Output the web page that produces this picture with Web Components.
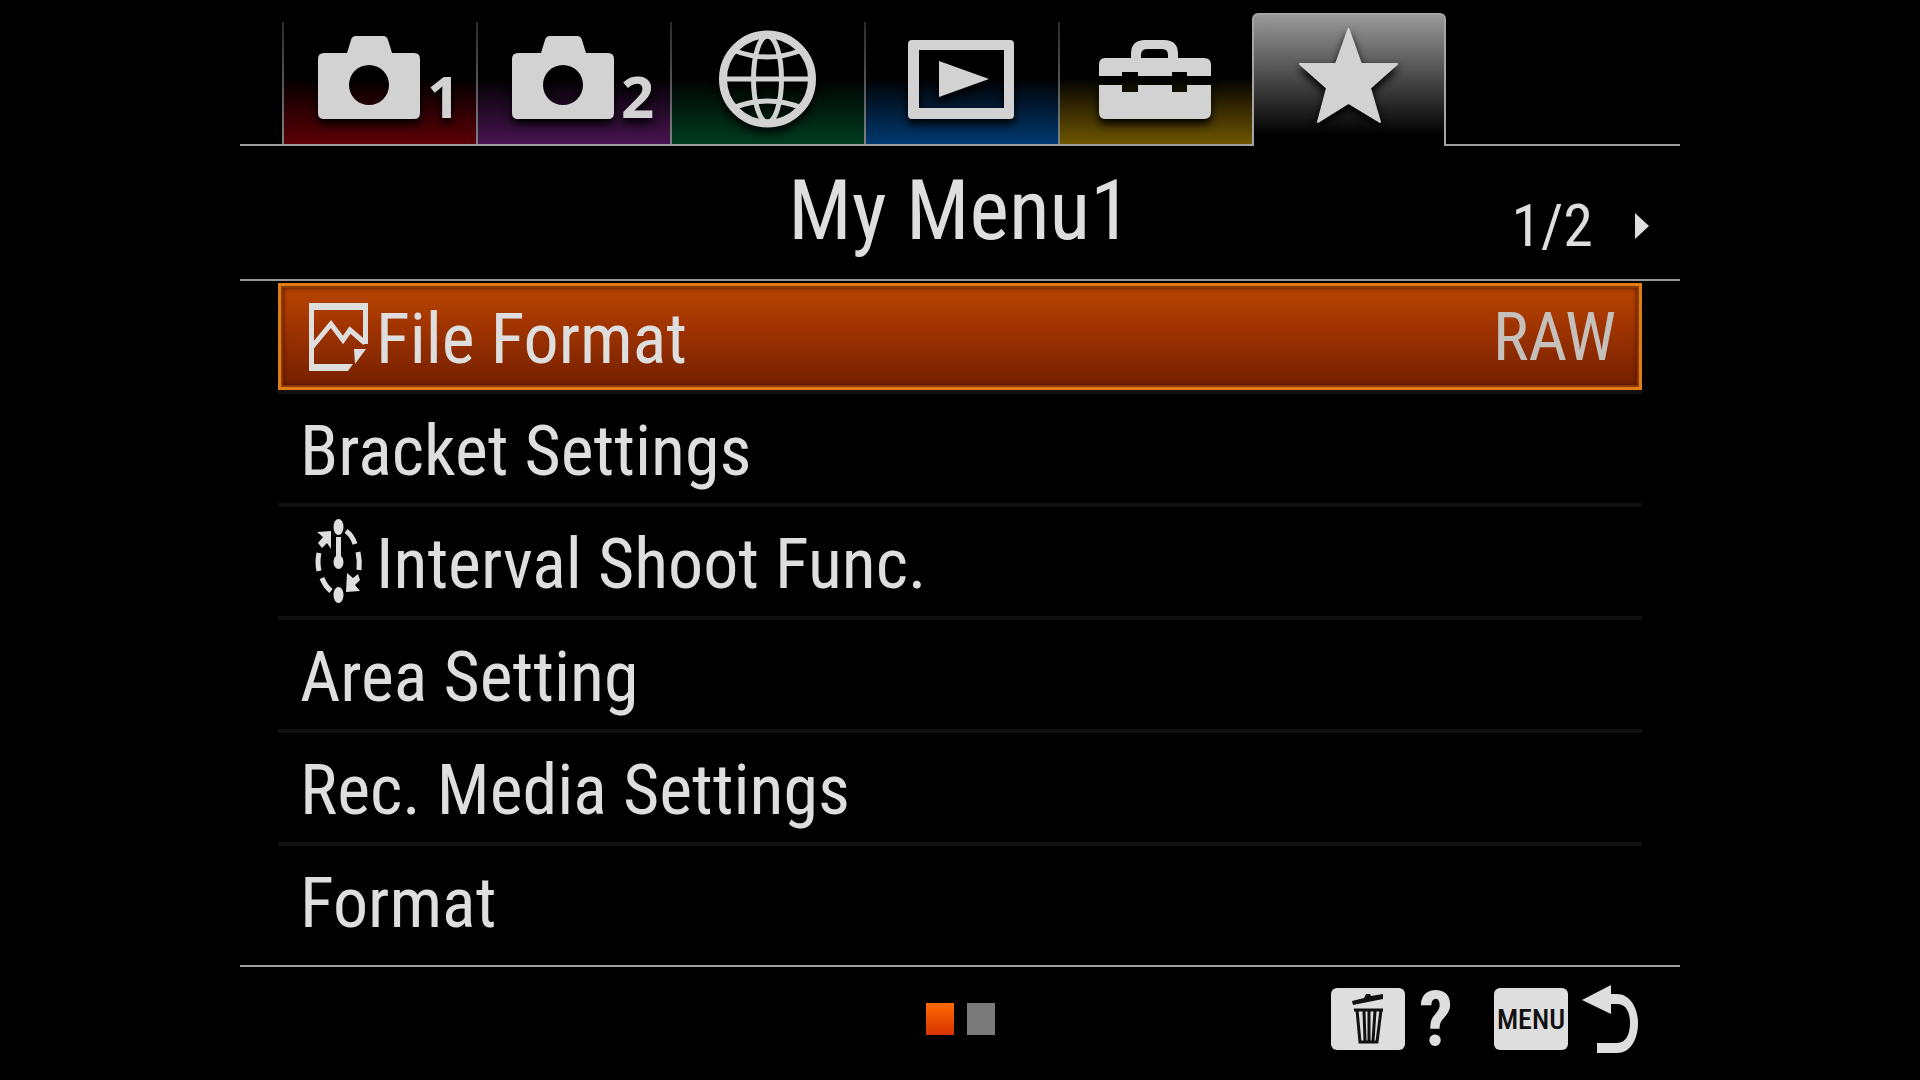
<!DOCTYPE html>
<html lang="en">
<head>
<meta charset="utf-8">
<title>My Menu</title>
<style>
  html, body { margin: 0; background: #000; }
  body { min-height: 100vh; color: #dedede; font-family: "Roboto Condensed", Roboto, sans-serif; }
</style>
</head>
<body>
<camera-menu></camera-menu>
<script>
const define = (name, html) => {
  const template = document.createElement('template');
  template.innerHTML = html;
  customElements.define(name, class extends HTMLElement {
    constructor() {
      super();
      this.attachShadow({ mode: 'open' }).append(template.content.cloneNode(true));
    }
    connectedCallback() {
      const label = this.getAttribute('label');
      const button = this.shadowRoot.querySelector('button');
      if (label && button) button.setAttribute('aria-label', label);
    }
  });
};
const reset = `button { font: inherit; color: inherit; background: none; border: 0; margin: 0; padding: 0; cursor: pointer; }`;

define('menu-tab', `
<style>
  ${reset}
  :host { display: block; flex: 1; --tint: #000; }
  button { display: block; width: 100%; box-sizing: border-box; height: 122px;
    background: linear-gradient(#2a2a2a, #808080) 0 0 / 2px 100% no-repeat,
      linear-gradient(#000 45%, var(--tint) 100%); }
  :host([active]) { margin-bottom: -2px; }
  :host([active]) button { height: 133px; border: 2px solid #a4a4a4; border-bottom: 0; border-radius: 6px 6px 0 0;
    background: linear-gradient(#999, #000 92%); }
  ::slotted(svg) { display: block; width: 100%; fill: #d2d2d2; filter: drop-shadow(0 5px 4px #000); }
</style>
<button role="tab"><slot></slot></button>`);

define('menu-row', `
<style>
  ${reset}
  :host { display: flow-root; height: 109px; border-bottom: 4px solid #101010; font-size: 70px; line-height: 104px; }
  button { display: flex; align-items: center; width: 100%; box-sizing: border-box; height: 109px; padding: 0 22px; text-align: left; }
  .label { flex: 1; padding-top: 5px; }
  .value { color: #c6c0bc; font-size: 67px; }
  :host([selected]) button { margin-top: 2px; height: 107px; padding: 0 23px 0 19px; border: 3px solid #e07c14; outline: 2px solid #8a3a00; outline-offset: -5px;
    background: linear-gradient(#b94600, #a03400 40%, #741f00); box-shadow: inset 0 0 5px 2px #4c1000; }
  ::slotted(svg) { display: block; flex: none; width: 76px; height: 92px; }
</style>
<button><slot name="icon"></slot><span class="label"><slot></slot></span><span class="value"><slot name="value"></slot></span></button>`);

define('page-dots', `
<style>
  ${reset}
  :host { display: flex; gap: 13px; }
  button { width: 28px; height: 32px; background: #7a7a7a; }
  .on { background: linear-gradient(#ff6a00, #d63400); }
</style>
<button class="on" aria-label="Page 1"></button><button aria-label="Page 2"></button>`);

define('key-hint', `
<style>
  ${reset}
  :host { display: block; }
  button { display: flex; align-items: center; gap: 14px; }
  .key { display: flex; align-items: center; justify-content: center; width: 74px; height: 62px; border-radius: 6px; background: #dedede; color: #111; font-size: 28px; font-weight: 500; }
  .act { display: flex; align-items: center; height: 68px; font-size: 76px; font-weight: bold; }
  ::slotted(svg) { display: block; }
</style>
<button><span class="key"><slot name="key"></slot></span><span class="act"><slot></slot></span></button>`);

define('camera-menu', `
<style>
  ${reset}
  :host { display: flex; flex-direction: column; width: 75%; min-height: 100vh; margin: 0 auto; }
  nav { display: flex; align-items: flex-end; height: 144px; padding: 0 234px 0 42px; border-bottom: 2px solid #a0a0a0; }
  header { display: grid; grid-template-columns: 1fr auto 1fr; align-items: center; height: 133px; border-bottom: 2px solid #939a9a; }
  h1 { grid-column: 2; margin: 0; padding-bottom: 4px; font-size: 84px; font-weight: normal; line-height: 120px; }
  .page { display: flex; align-items: center; justify-content: flex-end; gap: 42px; padding: 26px 31px 0 0; font-size: 60px; line-height: 80px; }
  main { flex: 1; padding: 0 38px 0 38px; }
  footer { display: grid; grid-template-columns: 1fr auto 1fr; align-items: center; height: 104px; margin-bottom: 9px; border-top: 2px solid #a0a0a0; }
  page-dots { grid-column: 2; }
  .keys { display: flex; justify-content: flex-end; gap: 41px; padding-right: 42px; }
  text { font: bold 58px "Open Sans", sans-serif; }
</style>
<nav role="tablist">
  <menu-tab label="Camera 1" style="--tint:#5c0006"><svg viewBox="282 22 194 122"><path fill-rule="evenodd" d="M324 53H347L351 40Q352 36 356 36H383Q387 36 388 40L392 53H414Q420 53 420 59V113Q420 119 414 119H324Q318 119 318 113V59Q318 53 324 53ZM369 65A20 20 0 1 0 369 105A20 20 0 1 0 369 65Z"/><text x="427" y="118">1</text></svg></menu-tab>
  <menu-tab label="Camera 2" style="--tint:#471450"><svg viewBox="282 22 194 122"><path fill-rule="evenodd" d="M324 53H347L351 40Q352 36 356 36H383Q387 36 388 40L392 53H414Q420 53 420 59V113Q420 119 414 119H324Q318 119 318 113V59Q318 53 324 53ZM369 65A20 20 0 1 0 369 105A20 20 0 1 0 369 65Z"/><text x="427" y="118">2</text></svg></menu-tab>
  <menu-tab label="Network" style="--tint:#003c20"><svg viewBox="670 22 194 122"><g fill="none" stroke="#d2d2d2" stroke-width="5"><circle cx="767.5" cy="79" r="44.500" stroke-width="8"/><ellipse cx="767.500" cy="79" rx="14" ry="43"/><path d="M724 79H811M733 50Q767.500 64 802 50M733 108Q767.500 94 802 108"/></g></svg></menu-tab>
  <menu-tab label="Playback" style="--tint:#003a70"><svg viewBox="864 22 194 122"><path fill-rule="evenodd" d="M912 40H1010Q1014 40 1014 44V115Q1014 119 1010 119H912Q908 119 908 115V44Q908 40 912 40ZM919 50V108H1004V50ZM939 61L989 79L939 97Z"/></svg></menu-tab>
  <menu-tab label="Setup" style="--tint:#6e5600"><svg viewBox="1058 22 194 122"><path d="M1105 58H1131V54Q1131 40 1145 40H1164Q1178 40 1178 54V58H1204Q1211 58 1211 65V76H1187V72H1172V76H1138V72H1122V76H1099V65Q1099 58 1105 58Z"/><path fill="#000" d="M1141 58V55Q1141 49 1147 49H1162Q1168 49 1168 55V58Z"/><path d="M1099 85H1122V92H1138V85H1172V92H1187V85H1211V112Q1211 119 1204 119H1105Q1099 119 1099 112Z"/></svg></menu-tab>
  <menu-tab label="My Menu" active style="--tint:#222"><svg viewBox="1254 15 190 131"><path stroke="#d2d2d2" stroke-width="2" stroke-linejoin="round" d="M1348.500 29L1361 64H1397L1370 88L1380 122L1348.500 103L1318 122L1327 88L1300 64H1336Z"/></svg></menu-tab>
</nav>
<header>
  <h1>My Menu1</h1>
  <div class="page"><span>1/2</span><button aria-label="Next page"><svg width="14" height="26" viewBox="0 0 14 26" style="display:block"><path fill="#dedede" d="M0 0L14 13L0 26Z"/></svg></button></div>
</header>
<main>
  <menu-row selected><svg slot="icon" viewBox="300 290 76 92"><path fill="#dedede" d="M309 302H368V343H363V309H314V363H353L348 370H309ZM354 348H366L355 363Z"/><path fill="none" stroke="#dedede" stroke-width="5" d="M312 346L331 323L343 339L350 329L365 342"/></svg>File Format<span slot="value">RAW</span></menu-row>
  <menu-row>Bracket Settings</menu-row>
  <menu-row><svg slot="icon" viewBox="300 516 76 92"><g fill="#dedede"><ellipse cx="338.500" cy="527" rx="5" ry="8"/><ellipse cx="338.500" cy="595" rx="5" ry="8"/><ellipse cx="338.500" cy="562" rx="5" ry="7"/><path d="M336 537H341V560H336ZM317 532L331 531V549L327 543L322 548L318 543L323 537ZM347 573L353 578L358 574L360 580L355 585L360 591L346 592Z"/><path fill="none" stroke="#dedede" stroke-width="5" d="M346 531Q352 535 355 544M358 552Q360 561 359 570M319 553Q317 562 319 571M322 578Q325 586 331 591"/></g></svg>Interval Shoot Func.</menu-row>
  <menu-row>Area Setting</menu-row>
  <menu-row>Rec. Media Settings</menu-row>
  <menu-row style="border-bottom-color:#000">Format</menu-row>
</main>
<footer>
  <page-dots></page-dots>
  <div class="keys">
    <key-hint><svg slot="key" width="34" height="52" viewBox="1351 993 34 52"><path fill="#111" d="M1352 1001L1364 998L1366 994H1370L1371 996L1383 994V999L1353 1005Z"/><path fill="none" stroke="#111" stroke-width="3" d="M1354 1010H1383M1357 1010L1360 1042H1377L1381 1010M1364 1011L1365 1041M1369 1011V1041M1375 1011L1373 1041"/></svg>?</key-hint>
    <key-hint><span slot="key">MENU</span><svg width="56" height="68" viewBox="1582 985 56 68"><path fill="#dedede" d="M1582 1000L1611 985V994H1617C1630 994 1638 1008 1638 1023C1638 1040 1630 1053 1617 1053H1597V1043H1617C1626 1043 1630 1034 1630 1023C1630 1012 1626 1004 1617 1004H1611V1014Z"/></svg></key-hint>
  </div>
</footer>`);
</script>
</body>
</html>
